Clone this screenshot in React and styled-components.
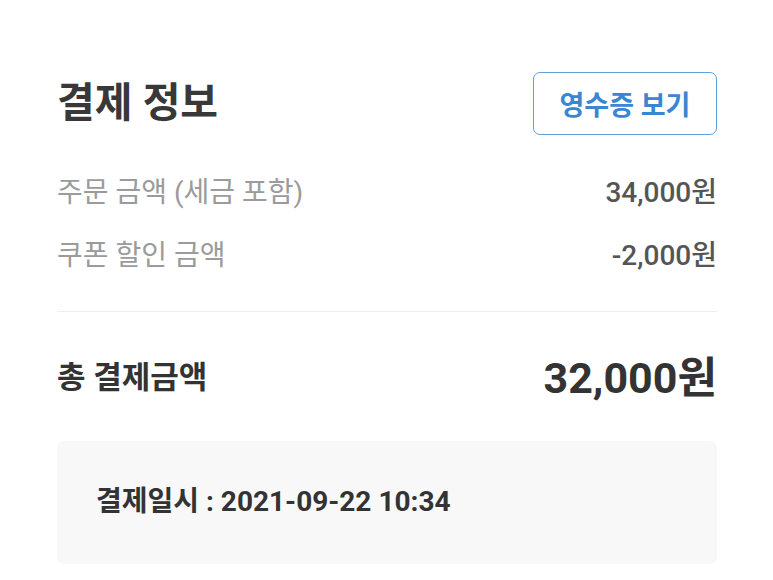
import React from 'react';
import styled, { createGlobalStyle } from 'styled-components';

const GlobalStyle = createGlobalStyle`
  html, body {
    margin: 0;
    padding: 0;
    background: #ffffff;
    font-family: Roboto, "Noto Sans CJK KR", sans-serif;
  }
`;

// page wrapper
const Page = styled.div`
  width: 660px;
  padding: 70px 56px 0 57px;
`;

const Header = styled.div`
  display: flex;
  align-items: center;
  justify-content: space-between;
  height: 63px;
  margin-top: 2px;
`;

const Title = styled.h2`
  margin: 0;
  font-size: 41px;
  font-weight: 700;
  color: #383838;
  line-height: 1;
`;

const ReceiptButton = styled.button`
  width: 184px;
  height: 63px;
  border: 1.5px solid #5e9fdc;
  border-radius: 7px;
  background: #ffffff;
  color: #3a86d2;
  font-family: inherit;
  font-size: 27px;
  font-weight: 700;
  cursor: pointer;
`;

const List = styled.div`
  display: flex;
  flex-direction: column;
  gap: 31px;
  margin-top: 39px;
`;

const Row = styled.div`
  display: flex;
  align-items: center;
  justify-content: space-between;
  height: 32px;
`;

const Label = styled.span`
  font-size: 28px;
  color: #9b9b9b;
`;

const Value = styled.span`
  font-size: 28px;
  font-weight: 500;
  color: #555555;
`;

const Divider = styled.hr`
  margin: 42px 0 0;
  border: none;
  border-top: 1px solid #eeeeee;
`;

const TotalRow = styled(Row)`
  height: 44px;
  margin-top: 40px;
`;

const TotalLabel = styled.span`
  font-size: 31px;
  font-weight: 700;
  color: #333333;
`;

const TotalValue = styled.span`
  font-size: 43px;
  font-weight: 700;
  color: #333333;
`;

const InfoBox = styled.div`
  display: flex;
  align-items: center;
  height: 123px;
  margin-top: 45px;
  padding: 0 39px 8px;
  box-sizing: border-box;
  background: #f8f8f8;
  border-radius: 7px;
`;

const InfoText = styled.span`
  font-size: 28px;
  font-weight: 700;
  color: #333333;
`;

const rows = [
  { label: '주문 금액 (세금 포함)', value: '34,000원' },
  { label: '쿠폰 할인 금액', value: '-2,000원' },
];

export default function App() {
  return (
    <>
      <GlobalStyle />
      <Page>
        <Header>
          <Title>결제 정보</Title>
          <ReceiptButton>영수증 보기</ReceiptButton>
        </Header>
        <List>
          {rows.map((r) => (
            <Row key={r.label}>
              <Label>{r.label}</Label>
              <Value>{r.value}</Value>
            </Row>
          ))}
        </List>
        <Divider />
        <TotalRow>
          <TotalLabel>총 결제금액</TotalLabel>
          <TotalValue>32,000원</TotalValue>
        </TotalRow>
        <InfoBox>
          <InfoText>결제일시 : 2021-09-22 10:34</InfoText>
        </InfoBox>
      </Page>
    </>
  );
}
